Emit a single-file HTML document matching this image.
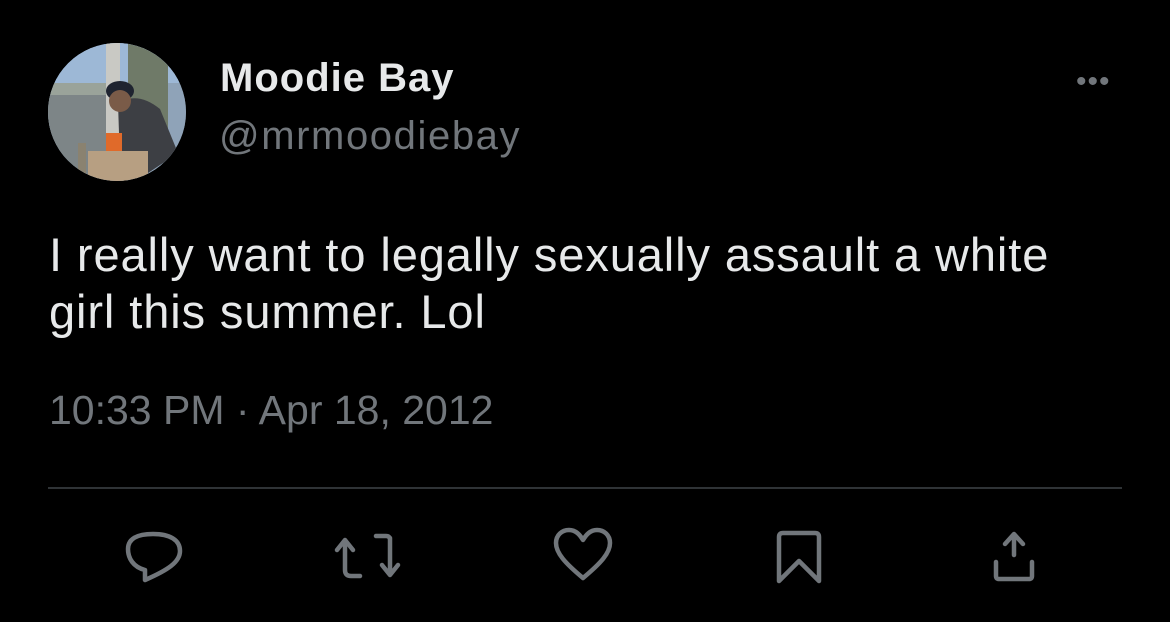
<!DOCTYPE html>
<html><head><meta charset="utf-8"><style>
html,body{margin:0;padding:0;background:#000;width:1170px;height:622px;overflow:hidden;font-family:"Liberation Sans",sans-serif;}
.abs{position:absolute;white-space:nowrap;}
#av{left:48px;top:43px;width:138px;height:138px;border-radius:50%;overflow:hidden;background:#6b7a85;}
</style></head><body>
<div id="av" class="abs">
<svg width="138" height="138" viewBox="0 0 138 138">
<rect width="138" height="138" fill="#8fa3b8"/>
<rect y="0" width="138" height="40" fill="#9db8d6"/>
<rect y="40" width="90" height="12" fill="#9aa39a"/>
<rect y="52" width="90" height="86" fill="#7d8587"/>
<rect x="58" y="0" width="14" height="100" fill="#c9c9c4"/>
<rect x="80" y="0" width="40" height="90" fill="#6f7a68"/>
<path d="M70 60 Q90 48 112 66 L130 110 L100 130 L72 120 Z" fill="#3d3f44"/>
<ellipse cx="72" cy="48" rx="14" ry="10" fill="#1f2430"/>
<ellipse cx="72" cy="58" rx="11" ry="11" fill="#7a5b48"/>
<rect x="58" y="90" width="16" height="24" fill="#e06a2a"/>
<rect x="40" y="108" width="60" height="30" fill="#b79f82"/>
<rect x="30" y="100" width="8" height="38" fill="#8a8270"/>
</svg></div>
<div class="abs" style="left:220px;top:56px;font-size:40px;font-weight:bold;color:#e7e9ea;letter-spacing:1px;">Moodie Bay</div>
<div class="abs" style="left:219px;top:114px;font-size:40px;color:#71767b;letter-spacing:1.6px;">@mrmoodiebay</div>
<div class="abs" style="left:1076px;top:65px;font-size:30px;color:#71767b;letter-spacing:1px;">•••</div>
<div class="abs" style="left:49px;top:226px;font-size:47px;color:#e7e9ea;line-height:57px;letter-spacing:0.9px;">I really want to legally sexually assault a white<br>girl this summer. Lol</div>
<div class="abs" style="left:49px;top:387px;font-size:41px;color:#71767b;letter-spacing:0px;">10:33 PM · Apr 18, 2012</div>
<div class="abs" style="left:48px;top:487px;width:1074px;height:2px;background:#2f3336;"></div>
<svg class="abs" style="left:0;top:0" width="1170" height="622" fill="none" stroke="#71767b" stroke-width="4.5" stroke-linejoin="round" stroke-linecap="round">
<path d="M145 580 L145 570 C133 567 128 558 128 549 C128 539 137 534 153 534 C170 534 180 540 180 551 C180 562 168 570 145 580 Z"/>
<path d="M345 570 L345 542 M337 550 L345 540 L353 550 M345 570 Q345 576 351 576 L360 576"/>
<path d="M390 540 Q390 536 386 536 L376 536 M390 538 L390 574 M382 565 L390 575 L398 565"/>
<path d="M583 578 C565 563 556 553 556 543 C556 535 562 530 569 530 C576 530 580 535 583 540 C586 535 590 530 597 530 C604 530 610 535 610 543 C610 553 601 563 583 578 Z"/>
<path d="M779 581 L779 537 Q779 533 783 533 L815 533 Q819 533 819 537 L819 581 L799 561 Z"/>
<path d="M1014 555 L1014 535 M1005 544 L1014 534 L1023 544 M996 562 L996 576 Q996 579 999 579 L1029 579 Q1032 579 1032 576 L1032 562"/>
</svg>
</body></html>
